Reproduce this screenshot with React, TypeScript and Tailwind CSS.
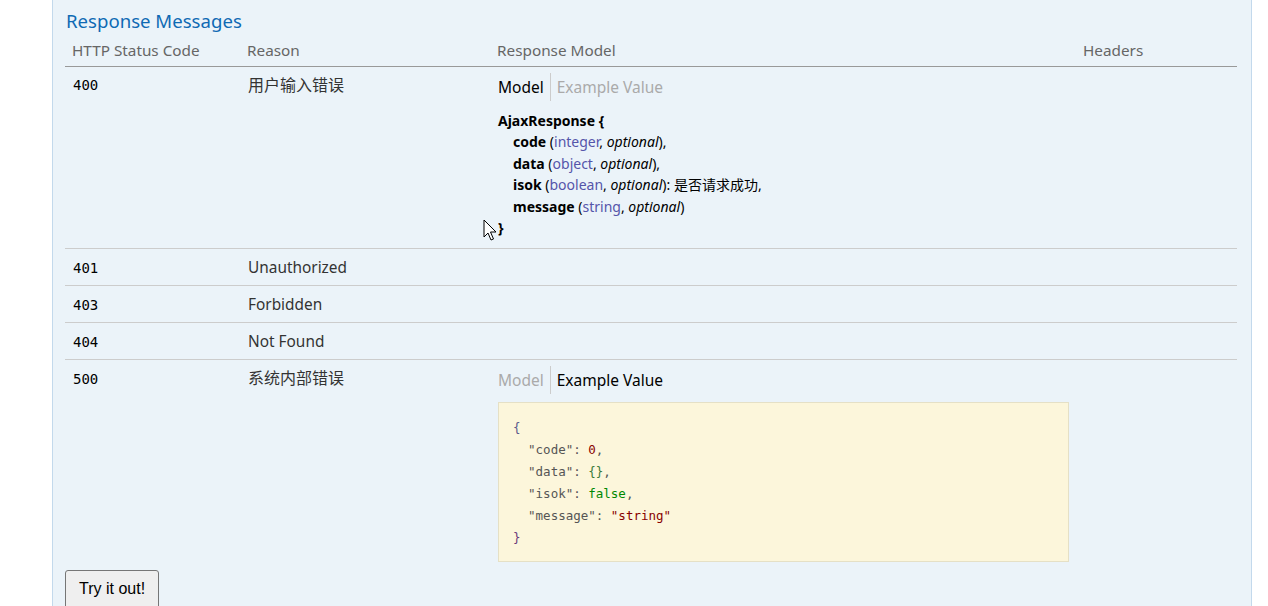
import React from 'react';

const sans = { fontFamily: '"Noto Sans", "Noto Sans CJK SC", sans-serif' };

// CJK runs are kept at their own size, Latin text is a touch narrower
const Cjk = ({ children, size = 'text-[16px]' }: { children: React.ReactNode; size?: string }) => (
  <span className={size}>{children}</span>
);

const Prop = ({ name, type, desc, last }: { name: string; type: string; desc?: string; last?: boolean }) => (
  <div className="h-[21.4px] leading-[21.4px] pl-[15px]">
    <span className="font-bold">{name}</span>{' '}
    (<span className="text-[#5555aa]">{type}</span>, <span className="italic">optional</span>)
    {desc && <span>: <Cjk size="text-[14px]">{desc}</Cjk></span>}
    {!last && ','}
  </div>
);

const Tabs = ({ active }: { active: 'model' | 'example' }) => (
  <div className="flex h-[28px] items-center text-[15.5px]">
    <span className={`pr-[6px] border-r border-[#ccc] leading-[28px] ${active === 'model' ? 'text-black' : 'text-[#aaa]'}`}>Model</span>
    <span className={`pl-[6px] leading-[28px] ${active === 'example' ? 'text-black' : 'text-[#aaa]'}`}>Example Value</span>
  </div>
);

const Code = ({ children }: { children: React.ReactNode }) => (
  <div className="w-[175px] shrink-0 pl-[8px] font-['DejaVu_Sans_Mono'] text-[14px] text-black leading-[22px]">{children}</div>
);

const SimpleRow = ({ code, reason }: { code: string; reason: string }) => (
  <div className="flex h-[37px] items-center border-t border-[#ccc] pt-px">
    <Code>{code}</Code>
    <div className="w-[250px] shrink-0 pl-[8px] text-[15.4px] text-[#333] leading-[22px]">{reason}</div>
  </div>
);

export default function App() {
  return (
    <div className="min-h-[606px] w-[1268px] bg-white overflow-hidden" style={sans}>
      <div className="ml-[52px] w-[1200px] h-[606px] bg-[#ebf3f9] border-x border-[#c3d9ec] pl-[12px] pr-[14px] relative">
        <h4 className="pt-[9px] pl-px text-[18.6px] leading-[24px] text-[#0f6ab4]">Response Messages</h4>

        {/* header */}
        <div className="flex h-[34px] items-end pb-[5px] border-b border-[#999] text-[15.3px] leading-[22px] text-[#666]">
          <div className="w-[175px] shrink-0 pl-[7px]">HTTP Status Code</div>
          <div className="w-[250px] shrink-0 pl-[7px]">Reason</div>
          <div className="w-[586px] shrink-0 pl-[7px]">Response Model</div>
          <div className="flex-1 pl-[7px]">Headers</div>
        </div>

        {/* 400 */}
        <div className="flex">
          <div className="pt-[7px]"><Code>400</Code></div>
          <div className="w-[250px] shrink-0 pl-[8px] pt-[7px] text-[16px] text-[#333] leading-[22px]">用户输入错误</div>
          <div className="w-[586px] shrink-0 pl-[8px] pt-[6px] pb-[10px]">
            <Tabs active="model" />
            <div className="mt-[9px] text-[14px] text-black">
              <div className="h-[21.4px] leading-[21.4px] font-bold">AjaxResponse {'{'}</div>
              <Prop name="code" type="integer" />
              <Prop name="data" type="object" />
              <Prop name="isok" type="boolean" desc="是否请求成功" />
              <Prop name="message" type="string" last />
              <div className="h-[21.4px] leading-[21.4px] font-bold">{'}'}</div>
            </div>
          </div>
        </div>

        <SimpleRow code="401" reason="Unauthorized" />
        <SimpleRow code="403" reason="Forbidden" />
        <SimpleRow code="404" reason="Not Found" />

        {/* 500 */}
        <div className="flex border-t border-[#ccc]">
          <div className="pt-[8px]"><Code>500</Code></div>
          <div className="w-[250px] shrink-0 pl-[8px] pt-[7px] text-[16px] text-[#333] leading-[22px]">系统内部错误</div>
          <div className="w-[586px] shrink-0 pl-[8px] pt-[6px] pb-[8px]">
            <Tabs active="example" />
            <div className="mt-[8px] w-[571px] h-[160px] bg-[#fcf6db] border border-[#e5e0c6] pl-[14px] pt-[14px] font-['DejaVu_Sans_Mono'] text-[12.5px] leading-[22px] text-[#555] whitespace-pre">
              <div className="text-[#5a5a8c]">{'{'}</div>
              <div>  "code": <span className="text-[#880000]">0</span>,</div>
              <div>  "data": <span className="text-[#3a7a3a]">{'{}'}</span>,</div>
              <div>  "isok": <span className="text-[#008800]">false</span>,</div>
              <div>  "message": <span className="text-[#880000]">"string"</span></div>
              <div className="text-[#6a3a7a]">{'}'}</div>
            </div>
          </div>
        </div>

        <button className="h-[40px] px-[13px] bg-[#efefef] border border-[#767676] rounded-[3px] text-[16px] text-black font-['Liberation_Sans'] leading-[20px] pb-[2px]">
          Try it out!
        </button>

        {/* mouse cursor */}
        <svg className="absolute left-[430px] top-[219px]" width="14" height="24" viewBox="0 0 14 24">
          <path d="M1 1 L1 18 L5 14 L8 21 L10.5 20 L7.5 13 L13 13 Z" fill="#fff" stroke="#000" strokeWidth="1" strokeLinejoin="round" />
        </svg>
      </div>
    </div>
  );
}
